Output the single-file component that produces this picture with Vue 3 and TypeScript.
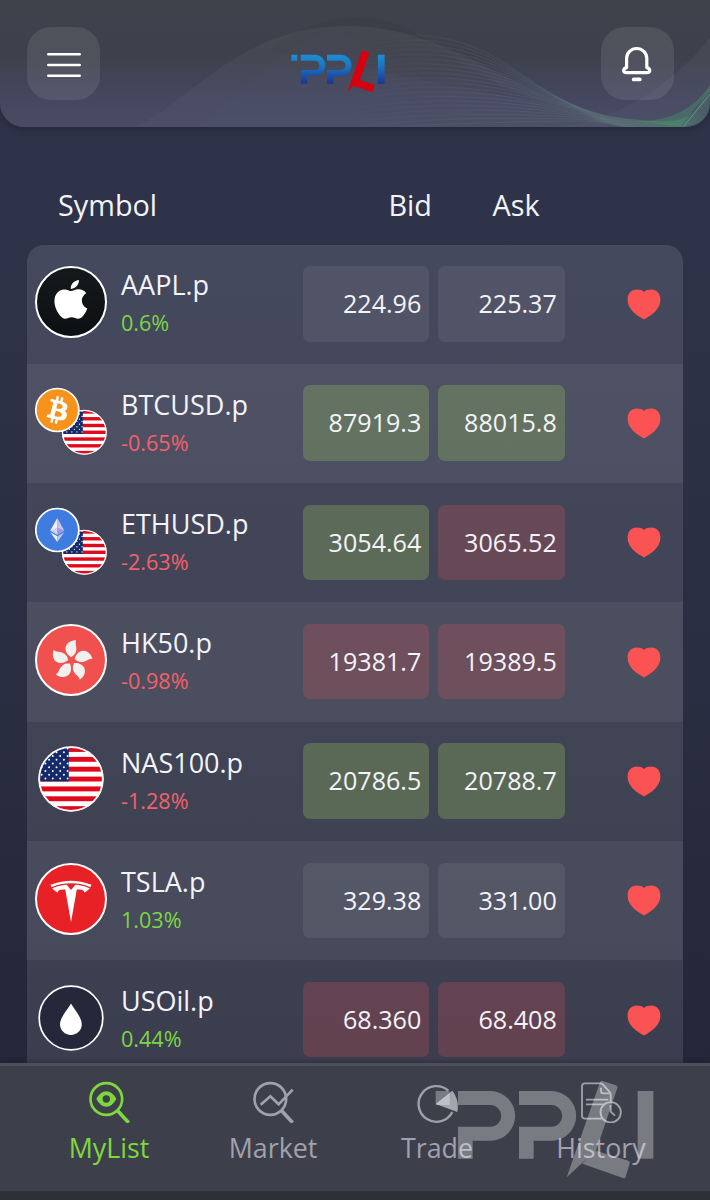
<script setup lang="ts">
type Tone = 'flat' | 'up' | 'down'

interface Quote {
  symbol: string
  change: string
  rising: boolean
  icon: string
  bid: string
  bidTone: Tone
  ask: string
  askTone: Tone
}

const quotes: Quote[] = [
  { symbol: 'AAPL.p', change: '0.6%', rising: true, icon: 'apple', bid: '224.96', bidTone: 'flat', ask: '225.37', askTone: 'flat' },
  { symbol: 'BTCUSD.p', change: '-0.65%', rising: false, icon: 'btc', bid: '87919.3', bidTone: 'up', ask: '88015.8', askTone: 'up' },
  { symbol: 'ETHUSD.p', change: '-2.63%', rising: false, icon: 'eth', bid: '3054.64', bidTone: 'up', ask: '3065.52', askTone: 'down' },
  { symbol: 'HK50.p', change: '-0.98%', rising: false, icon: 'hk', bid: '19381.7', bidTone: 'down', ask: '19389.5', askTone: 'down' },
  { symbol: 'NAS100.p', change: '-1.28%', rising: false, icon: 'us', bid: '20786.5', bidTone: 'up', ask: '20788.7', askTone: 'up' },
  { symbol: 'TSLA.p', change: '1.03%', rising: true, icon: 'tesla', bid: '329.38', bidTone: 'flat', ask: '331.00', askTone: 'flat' },
  { symbol: 'USOil.p', change: '0.44%', rising: true, icon: 'oil', bid: '68.360', bidTone: 'down', ask: '68.408', askTone: 'down' },
]

const tabs = ['MyList', 'Market', 'Trade', 'History']

// Staggered star rows of the flag's canton, relative to the flag centre
const stars: { x: number; y: number }[] = []
for (let r = 0; r < 9; r++) {
  for (let c = 0; c < 5; c++) {
    stars.push({ x: -33 + c * 7.4 + (r % 2 ? 3.7 : 0), y: -30.5 + r * 3.75 })
  }
}

// Fan of thin curves sweeping across the header towards its right edge
const waves: string[] = []
for (let i = 0; i < 20; i++) {
  waves.push(
    `M330 ${50 + i * 4.5} C400 ${28 + i * 5} ${455 + i * 1.5} ${28 + i * 5} ${515 + i * 2} ${70 + i * 2.7} S600 ${117 + i * 0.5} 648 ${121 + i * 0.4} S${692 + i * 0.5} ${112 + i * 0.4} 714 ${82 + i * 1.6}`,
  )
}
</script>

<template>
  <div class="screen">
    <svg class="defs" width="0" height="0" aria-hidden="true">
      <defs>
        <linearGradient id="brand-blue" gradientUnits="userSpaceOnUse" x1="0" y1="123" x2="0" y2="326">
          <stop offset="0" stop-color="#1c8fd6" />
          <stop offset="0.45" stop-color="#1b6fbd" />
          <stop offset="1" stop-color="#1a3592" />
        </linearGradient>
        <linearGradient id="apple-bg" x1="0" y1="0" x2="0" y2="1">
          <stop offset="0" stop-color="#14191c" />
          <stop offset="1" stop-color="#0d1012" />
        </linearGradient>
        <linearGradient id="wave-line" gradientUnits="userSpaceOnUse" x1="340" y1="0" x2="710" y2="0">
          <stop offset="0" stop-color="#6f8a94" stop-opacity="0" />
          <stop offset="0.35" stop-color="#6f8f98" stop-opacity="0.17" />
          <stop offset="0.7" stop-color="#7aa596" stop-opacity="0.18" />
          <stop offset="0.88" stop-color="#55a078" stop-opacity="0.24" />
          <stop offset="1" stop-color="#4aa06c" stop-opacity="0.28" />
        </linearGradient>
        <linearGradient id="hill" x1="0" y1="0" x2="0" y2="1">
          <stop offset="0" stop-color="#fff" stop-opacity="0.045" />
          <stop offset="1" stop-color="#fff" stop-opacity="0.02" />
        </linearGradient>
        <clipPath id="flag-clip"><circle r="32" /></clipPath>
      </defs>
      <symbol id="brand" viewBox="255 90 660 300">
        <g class="brand-main">
          <rect x="257" y="123" width="42" height="42" />
          <path d="M324 123H421A74.5 74.5 0 0 1 421 272H368V326H324V230H421A32.5 32.5 0 0 0 421 165H324Z" />
          <path d="M507 123H604A74.5 74.5 0 0 1 604 272H551V326H507V230H604A32.5 32.5 0 0 0 604 165H507Z" />
          <rect x="863" y="123" width="47" height="203" />
        </g>
        <path class="brand-accent" d="M757 93L798 106Q804 108 802 114L738 302L837 333Q841 335 839 340L827 381Q825 386 819 384L697 341L712 325L650 382L750 97Q752 91 757 93Z" />
      </symbol>
      <symbol id="us-flag" viewBox="-33 -33 66 66" overflow="visible">
        <circle r="32.5" fill="#f6f6f8" />
        <g clip-path="url(#flag-clip)">
          <rect x="-33" y="-33" width="66" height="66" fill="#fff" />
          <rect v-for="n in 7" :key="n" x="-33" :y="-32 + (n - 1) * 9.86" width="66" height="4.93" fill="#e00a1c" />
          <rect x="-33" y="-33" width="30.8" height="35.4" fill="#142a6b" />
          <g fill="#fff">
            <template v-for="(s, i) in stars" :key="i">
              <circle v-if="s.x < -3" :cx="s.x" :cy="s.y" r="0.95" />
            </template>
          </g>
        </g>
        <circle r="31.8" fill="none" stroke="#fafafa" stroke-width="1.8" />
      </symbol>
    </svg>

    <header class="topbar">
      <svg class="waves" viewBox="0 0 710 127" width="710" height="127" fill="none">
        <path d="M270 50C300 26 330 17 360 17C410 17 440 55 500 85C550 108 600 120 635 121Z" fill="#20242c" fill-opacity="0.08" />
        <path d="M135 127C195 98 240 27 345 26C440 25 500 85 600 117L640 127Z" fill="url(#hill)" />
        <path d="M195 127C245 95 280 42 335 30C400 50 420 127 420 127Z" fill="#59608a" fill-opacity="0.06" />
        <path d="M560 127C630 118 680 75 710 38V127Z" fill="url(#hill)" />
        <g stroke="url(#wave-line)" stroke-width="0.8">
          <path v-for="(d, i) in waves" :key="i" :d="d" />
        </g>
        <path d="M635 121Q684 123 710 85V91Q690 113 680 127Q660 124 635 121Z" fill="#4a9568" fill-opacity="0.4" />
        <path d="M684 126L710 94" stroke="#7bb89a" stroke-opacity="0.6" />
      </svg>
      <button class="round" aria-label="Menu">
        <svg class="bars" width="36" height="30" viewBox="0 0 36 30" stroke="#fff" stroke-width="2.6" stroke-linecap="round">
          <path d="M2.3 4.2H33.7M2.3 15H33.7M2.3 25.8H33.7" />
        </svg>
      </button>
      <svg class="logo" width="94.3" height="42.9" aria-label="PPLI"><use href="#brand" /></svg>
      <button class="round" aria-label="Notifications">
        <svg class="bell" width="32" height="38" viewBox="0 0 32 38" fill="none" stroke="#fff" stroke-width="3.2" stroke-linecap="round" stroke-linejoin="round">
          <path d="M5.6 22.6V13.6A9.9 9.9 0 0 1 25.8 13.6V22.6Q29.1 23.5 28.7 26.2Q28.3 27.7 26 27.7H5.4Q3.1 27.7 2.7 26.2Q2.3 23.5 5.6 22.6Z" />
          <path d="M12.7 34.4H18.7" stroke-width="3.8" />
        </svg>
      </button>
    </header>

    <main class="list">
      <div class="head">
        <span class="h-symbol">Symbol</span>
        <span class="h-bid">Bid</span>
        <span class="h-ask">Ask</span>
      </div>

      <div class="rows">
        <div v-for="q in quotes" :key="q.symbol" class="row">
          <svg class="coin" width="72" height="72" viewBox="0 0 72 72">
            <template v-if="q.icon === 'apple'">
              <circle cx="36" cy="36" r="35" fill="url(#apple-bg)" stroke="#fff" stroke-width="2" />
              <path transform="translate(15.7 13.9) scale(1.68 1.62)" fill="#fff" d="M12.152 6.896c-.948 0-2.415-1.078-3.96-1.04-2.04.027-3.91 1.183-4.961 3.014-2.117 3.675-.546 9.103 1.519 12.09 1.013 1.454 2.208 3.09 3.792 3.039 1.52-.065 2.09-.987 3.935-.987 1.831 0 2.35.987 3.96.948 1.637-.026 2.676-1.48 3.676-2.948 1.156-1.688 1.636-3.325 1.662-3.415-.039-.013-3.182-1.221-3.22-4.857-.026-3.04 2.48-4.494 2.597-4.559-1.429-2.09-3.623-2.324-4.39-2.376-2-.156-3.675 1.09-4.61 1.09zM15.53 3.83c.843-1.012 1.4-2.427 1.245-3.83-1.207.052-2.662.805-3.532 1.818-.78.896-1.454 2.338-1.273 3.714 1.338.104 2.715-.688 3.559-1.701" />
            </template>
            <template v-else-if="q.icon === 'btc' || q.icon === 'eth'">
              <use href="#us-flag" x="26.7" y="24.6" width="45.3" height="45.3" />
              <g class="front" transform="translate(22.3 25)">
                <template v-if="q.icon === 'btc'">
                  <circle r="21.5" fill="#f7931a" stroke="#fff" stroke-width="1.7" />
                  <path transform="translate(-22.4 -22.4) scale(1.4)" fill="#fff" d="M23.189 14.02c.314-2.096-1.283-3.223-3.465-3.975l.708-2.84-1.728-.43-.69 2.765c-.454-.114-.92-.22-1.385-.326l.695-2.783L15.596 6l-.708 2.839c-.376-.086-.746-.17-1.104-.26l.002-.009-2.384-.595-.46 1.846s1.283.294 1.256.312c.7.175.826.638.805 1.006l-.806 3.235c.048.012.11.03.18.057l-.183-.045-1.13 4.532c-.086.212-.303.531-.793.41.018.025-1.256-.313-1.256-.313l-.858 1.978 2.25.561c.418.105.828.215 1.231.318l-.715 2.872 1.727.43.708-2.84c.472.127.93.245 1.378.357l-.706 2.828 1.728.43.715-2.866c2.948.558 5.164.333 6.097-2.333.752-2.146-.037-3.385-1.588-4.192 1.13-.26 1.98-1.003 2.207-2.538zm-3.95 5.538c-.533 2.147-4.148.986-5.32.695l.95-3.805c1.172.293 4.929.872 4.37 3.11zm.535-5.569c-.487 1.953-3.495.96-4.47.717l.86-3.45c.975.243 4.118.696 3.61 2.733z" />
                </template>
                <template v-else>
                  <circle r="21.5" fill="#3f7ce0" stroke="#fff" stroke-width="1.7" />
                  <path d="M0 -12L-7 0.6L0 4.7Z" fill="#f2f0ff" />
                  <path d="M0 -12L7 0.6L0 4.7Z" fill="#c6c4f2" />
                  <path d="M-7 0.6L0 -2.6V4.7Z" fill="#d2d0f8" />
                  <path d="M7 0.6L0 -2.6V4.7Z" fill="#9d9be0" />
                  <path d="M-7 2.2L0 6.3V12Z" fill="#f2f0ff" />
                  <path d="M7 2.2L0 6.3V12Z" fill="#c6c4f2" />
                </template>
              </g>
            </template>
            <template v-else-if="q.icon === 'hk'">
              <circle cx="36" cy="36" r="35" fill="#f0514f" stroke="#fff" stroke-width="2" />
              <g fill="#f1f0ef" transform="translate(36.6 36.6)">
                <path v-for="n in 5" :key="n" :transform="`rotate(${(n - 1) * 72})`" d="M-0.6 -3.4C-4.6 -6 -7 -10 -5.8 -14C-4.6 -18 -0.6 -20.4 4.6 -20.4C3 -16.6 5.8 -13.6 4.4 -9C3.4 -5.8 1.4 -4.6 -0.6 -3.4Z" />
              </g>
            </template>
            <use v-else-if="q.icon === 'us'" href="#us-flag" x="3" y="3" width="66" height="66" />
            <template v-else-if="q.icon === 'tesla'">
              <circle cx="36" cy="36" r="35" fill="#e82127" stroke="#fff" stroke-width="2" />
              <path transform="translate(15.5 17.7) scale(1.71 1.735)" fill="#fff" d="M12 5.362l2.475-3.026s4.245.09 8.471 2.054c-1.082 1.636-3.231 2.438-3.231 2.438-.146-1.439-1.154-1.79-4.354-1.79L12 24 8.619 5.034c-3.18 0-4.188.354-4.335 1.792 0 0-2.146-.795-3.229-2.43C5.28 2.431 9.525 2.34 9.525 2.34L12 5.362l-.004.002H12v-.002zm0-3.899c3.415-.03 7.326.528 11.328 2.28.535-.968.672-1.395.672-1.395C19.625.612 15.528.015 12 0 8.472.015 4.375.61 0 2.349c0 0 .195.525.672 1.396C4.674 1.989 8.585 1.435 12 1.46v.003z" />
            </template>
            <template v-else>
              <circle cx="36" cy="36" r="31.8" fill="#25283b" stroke="#fff" stroke-width="1.7" />
              <path d="M36 21.6C39.2 27.4 46.8 35.6 46.8 42.2A10.9 10.8 0 0 1 25 42.2C25 35.6 32.8 27.4 36 21.6Z" fill="#fff" />
            </template>
          </svg>
          <div class="name">
            <span class="symbol">{{ q.symbol }}</span>
            <span class="change" :class="{ rising: q.rising }">{{ q.change }}</span>
          </div>
          <div class="price" :class="q.bidTone">{{ q.bid }}</div>
          <div class="price" :class="q.askTone">{{ q.ask }}</div>
          <svg class="heart" width="34" height="31" viewBox="0 0 34 31">
            <path d="M17 30.5C9.5 26.4 0.6 20.4 0.6 10.8C0.6 4.2 4.6 0.6 9.6 0.6C12.8 0.6 15.2 1.3 17 3C18.8 1.3 21.2 0.6 24.4 0.6C29.4 0.6 33.4 4.2 33.4 10.8C33.4 20.4 24.5 26.4 17 30.5Z" fill="#fb5353" />
          </svg>
        </div>
      </div>
    </main>

    <nav class="tabbar">
      <div class="tabs">
        <a v-for="(t, i) in tabs" :key="t" class="tab" :class="{ active: i === 0 }">
          <svg width="44" height="44" viewBox="0 0 132 132" fill="none" stroke="currentColor" stroke-width="8">
            <template v-if="t === 'MyList'">
              <circle cx="58" cy="60" r="47.5" />
              <path d="M92 95L125 131" stroke-width="11" />
              <path d="M28 60Q40 37 58 37T88 60Q76 83 58 83T28 60ZM58 49A11 11 0 1 0 58 71A11 11 0 1 0 58 49Z" fill="currentColor" fill-rule="evenodd" stroke="none" />
            </template>
            <template v-else-if="t === 'Market'">
              <circle cx="58" cy="60" r="47.5" />
              <path d="M29 77L58 52L83 76L125 32" />
              <path d="M92 95L125 131" stroke-width="11" />
            </template>
            <template v-else-if="t === 'Trade'">
              <path d="M100 35A53.5 53.5 0 1 0 112 99" stroke-width="7" />
              <path d="M62 75L112 35Q134 63 127 99Z" fill="#a4a5ae" stroke="none" />
            </template>
            <g v-else stroke-width="5.5" stroke-linejoin="round">
              <path d="M68 119H18Q9 119 9 110V22Q9 13 18 13H64Q69 13 72 17L91 38Q95 42 95 47V69" />
              <path d="M66 26V36Q66 43 73 43H92M21 62H88M21 76H78" />
              <circle cx="95" cy="100" r="30.5" />
              <path d="M95 78V98L108 110" />
            </g>
          </svg>
          <span>{{ t }}</span>
        </a>
      </div>
      <svg class="watermark" width="220" height="100" aria-hidden="true"><use href="#brand" /></svg>
    </nav>
  </div>
</template>

<style>
body {
  margin: 0;
  background: #2d3038;
}
</style>

<style scoped>
.screen {
  width: 710px;
  height: 1200px;
  overflow: hidden;
  display: flex;
  flex-direction: column;
  background: linear-gradient(180deg, #2e3249 0%, #2f3349 20%, #292d40 60%, #24273a 88%);
  font-family: "Open Sans", "Noto Sans", sans-serif;
  color: #f3f3fa;
}
.defs {
  position: absolute;
}
.topbar {
  position: relative;
  flex: none;
  box-sizing: border-box;
  height: 126.5px;
  padding: 27px 36.5px 0 27px;
  display: flex;
  justify-content: space-between;
  align-items: flex-start;
  overflow: hidden;
  border-radius: 0 0 24px 24px;
  background: linear-gradient(180deg, #3e424b 0%, #3e414c 45%, #444760 78%, #484c63 100%);
  box-shadow: 0 2px 6px rgba(20, 22, 36, 0.4);
}
.waves {
  position: absolute;
  left: 0;
  top: 0;
}
.round {
  position: relative;
  width: 72.5px;
  height: 72.5px;
  padding: 0;
  border: 0;
  border-radius: 24px;
  display: flex;
  align-items: center;
  justify-content: center;
  background: rgba(255, 255, 255, 0.09);
}
.bars {
  margin: 4px 0 0 2px;
}
.bell {
  margin-top: 1px;
}
.logo {
  position: relative;
  margin-top: 23.3px;
  margin-right: 24.8px;
  fill: url(#brand-blue);
  --accent: #d7000f;
}
.brand-accent {
  fill: var(--accent);
}
.list {
  flex: 1;
  min-height: 0;
  overflow: hidden;
  padding: 57px 27px 0;
}
.head {
  display: grid;
  grid-template-columns: 330.5px 104px 1fr;
  padding-left: 31px;
  height: 61px;
  font-size: 28.8px;
  line-height: 41px;
}
.rows {
  overflow: hidden;
  border-radius: 17px 17px 0 0;
  background: rgba(255, 255, 255, 0.11);
}
.row {
  box-sizing: border-box;
  height: 119.33px;
  padding: 21.5px 21.8px 0 7.5px;
  display: grid;
  grid-template-columns: 72px 182.3px 126.5px 126.5px 1fr;
  align-items: start;
}
.row:nth-child(even) {
  background: rgba(255, 255, 255, 0.055);
}
.name {
  padding-left: 14.5px;
  margin-top: 0.2px;
  display: flex;
  flex-direction: column;
  line-height: 38px;
}
.symbol {
  font-size: 27px;
}
.change {
  font-size: 21.6px;
  color: #f4606a;
}
.change.rising {
  color: #7bd645;
}
.price {
  box-sizing: border-box;
  height: 75.5px;
  margin-left: 14px;
  margin-right: -14px;
  padding-right: 8px;
  border-radius: 7px;
  text-align: right;
  font-size: 25.1px;
  line-height: 75.5px;
  background: rgba(255, 255, 255, 0.07);
}
.price + .price {
  margin-left: 23px;
  margin-right: -23px;
}
.price.up {
  background: rgba(153, 195, 93, 0.3);
}
.price.down {
  background: rgba(255, 83, 83, 0.2);
}
.heart {
  justify-self: end;
  margin-top: 22.6px;
}
.tabbar {
  position: relative;
  flex: none;
  box-sizing: border-box;
  height: 137px;
  border-top: 3px solid #4d505b;
  border-bottom: 9px solid #2d3037;
  background: #3d404b;
  box-shadow: 0 -2px 3px rgba(30, 32, 44, 0.35);
}
.tabs {
  display: grid;
  grid-template-columns: repeat(4, 164px);
  padding: 13px 27px 0;
}
.tab {
  display: flex;
  flex-direction: column;
  align-items: center;
  color: #a0a1ad;
  font-size: 26.8px;
  line-height: 40px;
}
.tab span {
  margin-top: 5px;
}
.tab.active {
  color: #7ed83c;
}
.watermark {
  position: absolute;
  left: 435px;
  top: 14px;
  fill: #fff;
  opacity: 0.31;
  --accent: #fff;
}
</style>
